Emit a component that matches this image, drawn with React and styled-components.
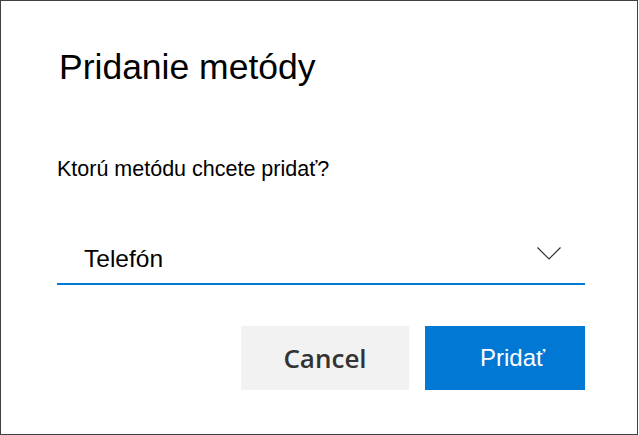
import React from 'react'
import styled, { createGlobalStyle } from 'styled-components'

const GlobalStyle = createGlobalStyle`
  html, body {
    margin: 0;
    padding: 0;
    background: #fff;
  }
  body {
    font-family: "Liberation Sans", Arial, sans-serif;
  }
`

const Dialog = styled.div`
  box-sizing: border-box;
  width: 638px;
  height: 435px;
  border: 1px solid #404040;
  background: #fff;
  padding: 46px 52px 0 56px;
  display: flex;
  flex-direction: column;
`

const Title = styled.h1`
  margin: 0 0 0 2px;
  font-size: 35.5px;
  line-height: 40px;
  font-weight: normal;
  color: #000;
`

const Question = styled.p`
  margin: 70px 0 0;
  font-size: 21.5px;
  line-height: 24px;
  color: #000;
`

const Select = styled.div`
  box-sizing: border-box;
  margin-top: 56px;
  height: 48px;
  padding: 8px 24px 10px 27px;
  border-bottom: 2px solid #0078d4;
  display: flex;
  justify-content: space-between;
  align-items: flex-start;
`

const SelectValue = styled.span`
  font-size: 24.5px;
  line-height: 28px;
  color: #000;
`

const Chevron = styled.svg`
  margin-top: 2px;
  display: block;
`

const Actions = styled.div`
  margin-top: 41px;
  display: flex;
  justify-content: flex-end;
  gap: 16px;
`

const Button = styled.button`
  box-sizing: border-box;
  height: 64px;
  width: ${p => (p.$primary ? '160px' : '168px')};
  border: none;
  padding: ${p => (p.$primary ? '0 0 0 15px' : '0')};
  display: flex;
  align-items: center;
  justify-content: center;
  background: ${p => (p.$primary ? '#0078d4' : '#f2f2f2')};
  color: ${p => (p.$primary ? '#fff' : '#333')};
  font-family: ${p =>
    p.$primary ? '"Liberation Sans", Arial, sans-serif' : '"Open Sans", "Noto Sans", sans-serif'};
  font-weight: ${p => (p.$primary ? 400 : 600)};
  font-size: ${p => (p.$primary ? '24px' : '26px')};
  cursor: pointer;
`

export default function App() {
  return (
    <>
      <GlobalStyle />
      <Dialog>
        <Title>Pridanie metódy</Title>
        <Question>Ktorú metódu chcete pridať?</Question>
        <Select>
          <SelectValue>Telefón</SelectValue>
          <Chevron width="24" height="13" viewBox="0 0 24 13">
            <polyline points="0.5,0.5 12,12 23.5,0.5" fill="none" stroke="#333" strokeWidth="1.2" />
          </Chevron>
        </Select>
        <Actions>
          <Button>Cancel</Button>
          <Button $primary>Pridať</Button>
        </Actions>
      </Dialog>
    </>
  )
}
